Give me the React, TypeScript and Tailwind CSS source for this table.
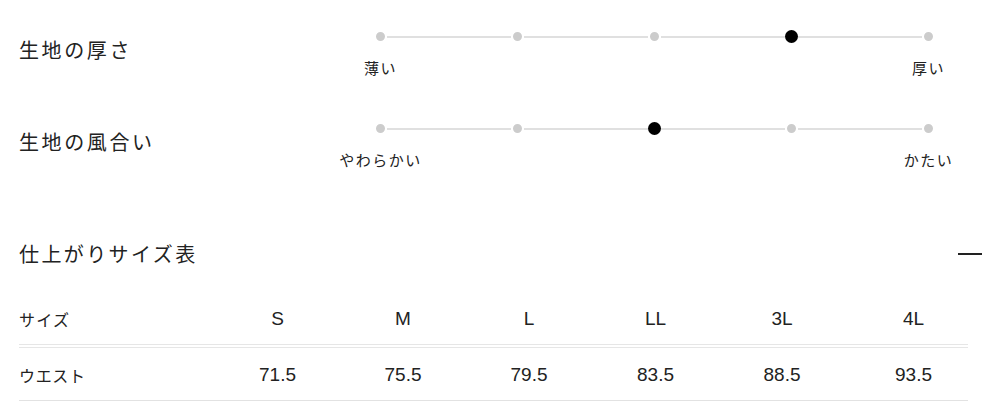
const jp = "font-['Noto_Sans_CJK_JP',sans-serif]";
const num = "font-['Liberation_Sans','Noto_Sans_CJK_JP',sans-serif]";

type Rating = {
  label: string;
  min: string;
  max: string;
  value: number;
};

const ratings: Rating[] = [
  { label: "生地の厚さ", min: "薄い", max: "厚い", value: 3 },
  { label: "生地の風合い", min: "やわらかい", max: "かたい", value: 2 },
];

const sizes = ["S", "M", "L", "LL", "3L", "4L"];
const waist = ["71.5", "75.5", "79.5", "83.5", "88.5", "93.5"];
// 列幅（最終列は少し右寄せ）
const colClass = [
  "w-[125px]",
  "w-[126px]",
  "w-[126px]",
  "w-[127px]",
  "w-[126px]",
  "w-[123px] pl-[14px]",
];

function Scale({ value }: { value: number }) {
  const steps = [0, 1, 2, 3, 4];
  return (
    <div className="flex items-center">
      {steps.map((i) => (
        <div key={i} className={`flex items-center ${i === 0 ? "" : "flex-1"}`}>
          {i > 0 && <div className="h-[2px] flex-1 bg-[#e0e0e0]" />}
          {i === value ? (
            <span className="h-[13px] w-[13px] rounded-full bg-black" />
          ) : (
            <span className="h-[13px] w-[13px] rounded-full border-2 border-white bg-[#cccccc]" />
          )}
        </div>
      ))}
    </div>
  );
}

function RatingRow({ rating }: { rating: Rating }) {
  return (
    <div className="flex items-start">
      <p
        className={`mt-[36px] w-[355px] text-[20px] leading-[28px] tracking-[0.13em] text-[#222] ${jp}`}
      >
        {rating.label}
      </p>
      <div className="mt-[30px] w-[561px]">
        <Scale value={rating.value} />
        <div className="mt-[15px] flex justify-between">
          <span className="flex w-[13px] justify-center">
            <span
              className={`whitespace-nowrap text-[15px] leading-[20px] tracking-[0.1em] text-[#222] ${jp}`}
            >
              {rating.min}
            </span>
          </span>
          <span className="flex w-[13px] justify-center">
            <span
              className={`whitespace-nowrap text-[15px] leading-[20px] tracking-[0.1em] text-[#222] ${jp}`}
            >
              {rating.max}
            </span>
          </span>
        </div>
      </div>
    </div>
  );
}

export default function App() {
  return (
    <div className="min-h-[417px] w-[1000px] bg-white pl-[19px] pr-[18px]">
      <RatingRow rating={ratings[0]} />
      <div className="mt-[14px]">
        <RatingRow rating={ratings[1]} />
      </div>

      <div className="mt-[70px] flex items-center justify-between">
        <h2
          className={`text-[20px] font-normal leading-[28px] tracking-[0.12em] text-[#222] ${jp}`}
        >
          仕上がりサイズ表
        </h2>
        <span className="h-[2px] w-[24px] bg-[#222]" />
      </div>

      <table className="mt-[26px] w-[949px] table-fixed border-collapse text-[#222]">
        <thead>
          <tr className="border-b-[4px] border-double border-[#e6e6e6]">
            <th
              className={`h-[52px] w-[196px] pb-[1px] text-left text-[16px] font-normal tracking-[0.08em] ${jp}`}
            >
              サイズ
            </th>
            {sizes.map((s, i) => (
              <th
                key={s}
                className={`h-[52px] text-center text-[19px] font-normal ${colClass[i]} ${num}`}
              >
                {s}
              </th>
            ))}
          </tr>
        </thead>
        <tbody>
          <tr className="border-b border-[#e2e2e2]">
            <td
              className={`h-[54px] pt-[2px] text-left text-[16px] tracking-[0.04em] ${jp}`}
            >
              ウエスト
            </td>
            {waist.map((w, i) => (
              <td
                key={w}
                className={`h-[54px] pt-[2px] text-center text-[19px] ${colClass[i]} ${num}`}
              >
                {w}
              </td>
            ))}
          </tr>
        </tbody>
      </table>
    </div>
  );
}
